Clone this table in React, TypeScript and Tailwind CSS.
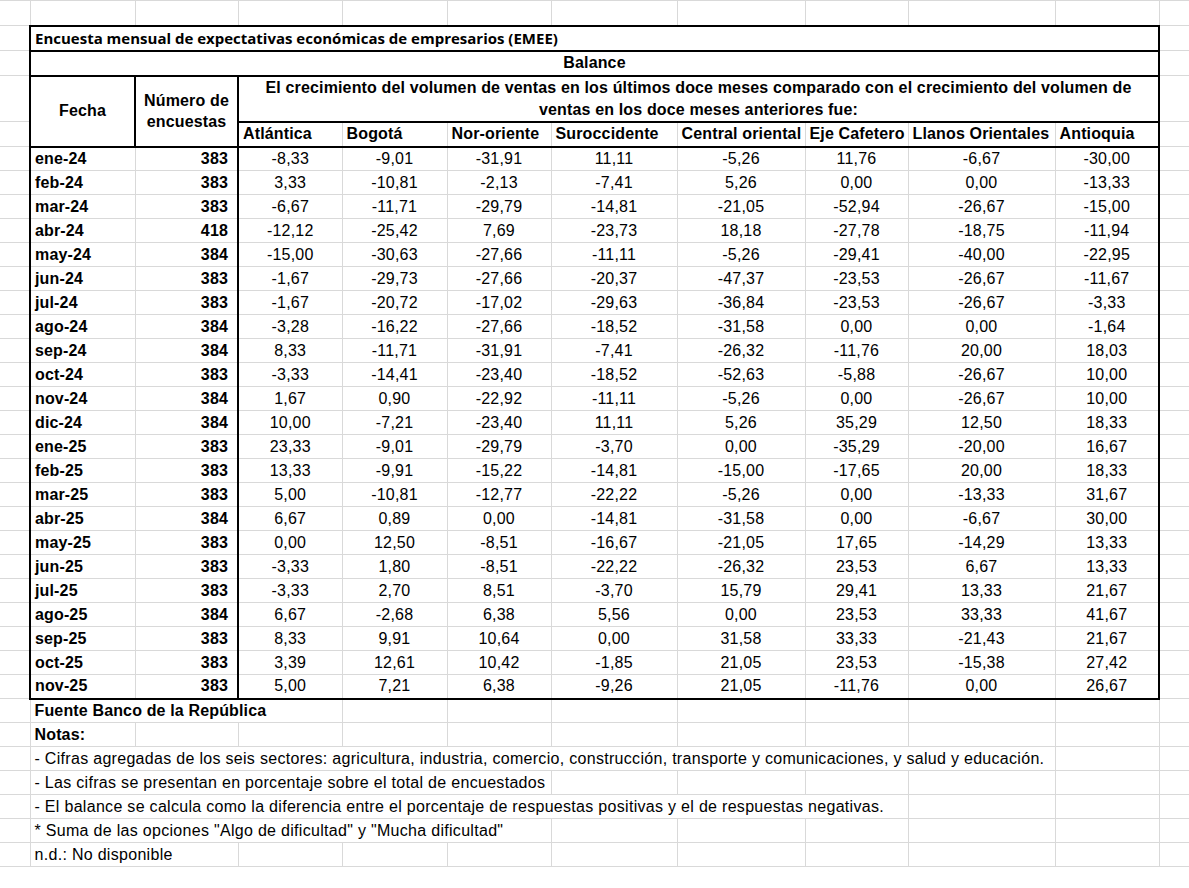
import React from "react";

const rows: [string, string, string[]][] = [
  ["ene-24", "383", ["-8,33", "-9,01", "-31,91", "11,11", "-5,26", "11,76", "-6,67", "-30,00"]],
  ["feb-24", "383", ["3,33", "-10,81", "-2,13", "-7,41", "5,26", "0,00", "0,00", "-13,33"]],
  ["mar-24", "383", ["-6,67", "-11,71", "-29,79", "-14,81", "-21,05", "-52,94", "-26,67", "-15,00"]],
  ["abr-24", "418", ["-12,12", "-25,42", "7,69", "-23,73", "18,18", "-27,78", "-18,75", "-11,94"]],
  ["may-24", "384", ["-15,00", "-30,63", "-27,66", "-11,11", "-5,26", "-29,41", "-40,00", "-22,95"]],
  ["jun-24", "383", ["-1,67", "-29,73", "-27,66", "-20,37", "-47,37", "-23,53", "-26,67", "-11,67"]],
  ["jul-24", "383", ["-1,67", "-20,72", "-17,02", "-29,63", "-36,84", "-23,53", "-26,67", "-3,33"]],
  ["ago-24", "384", ["-3,28", "-16,22", "-27,66", "-18,52", "-31,58", "0,00", "0,00", "-1,64"]],
  ["sep-24", "384", ["8,33", "-11,71", "-31,91", "-7,41", "-26,32", "-11,76", "20,00", "18,03"]],
  ["oct-24", "383", ["-3,33", "-14,41", "-23,40", "-18,52", "-52,63", "-5,88", "-26,67", "10,00"]],
  ["nov-24", "384", ["1,67", "0,90", "-22,92", "-11,11", "-5,26", "0,00", "-26,67", "10,00"]],
  ["dic-24", "384", ["10,00", "-7,21", "-23,40", "11,11", "5,26", "35,29", "12,50", "18,33"]],
  ["ene-25", "383", ["23,33", "-9,01", "-29,79", "-3,70", "0,00", "-35,29", "-20,00", "16,67"]],
  ["feb-25", "383", ["13,33", "-9,91", "-15,22", "-14,81", "-15,00", "-17,65", "20,00", "18,33"]],
  ["mar-25", "383", ["5,00", "-10,81", "-12,77", "-22,22", "-5,26", "0,00", "-13,33", "31,67"]],
  ["abr-25", "384", ["6,67", "0,89", "0,00", "-14,81", "-31,58", "0,00", "-6,67", "30,00"]],
  ["may-25", "383", ["0,00", "12,50", "-8,51", "-16,67", "-21,05", "17,65", "-14,29", "13,33"]],
  ["jun-25", "383", ["-3,33", "1,80", "-8,51", "-22,22", "-26,32", "23,53", "6,67", "13,33"]],
  ["jul-25", "383", ["-3,33", "2,70", "8,51", "-3,70", "15,79", "29,41", "13,33", "21,67"]],
  ["ago-25", "384", ["6,67", "-2,68", "6,38", "5,56", "0,00", "23,53", "33,33", "41,67"]],
  ["sep-25", "383", ["8,33", "9,91", "10,64", "0,00", "31,58", "33,33", "-21,43", "21,67"]],
  ["oct-25", "383", ["3,39", "12,61", "10,42", "-1,85", "21,05", "23,53", "-15,38", "27,42"]],
  ["nov-25", "383", ["5,00", "7,21", "6,38", "-9,26", "21,05", "-11,76", "0,00", "26,67"]],
];

const regions = [
  "Atlántica",
  "Bogotá",
  "Nor-oriente",
  "Suroccidente",
  "Central oriental",
  "Eje Cafetero",
  "Llanos Orientales",
  "Antioquia",
];

const widths = [30, 105, 103, 104, 105, 104, 126, 128, 103, 147, 104, 30];

const footer: [string, number, boolean][] = [
  ["Fuente Banco de la República", 3, true],
  ["Notas:", 1, true],
  [
    "- Cifras agregadas de los seis sectores: agricultura, industria, comercio, construcción, transporte y comunicaciones, y salud y educación.",
    9,
    false,
  ],
  ["- Las cifras se presentan en porcentaje sobre el total de encuestados", 5, false],
  [
    "- El balance se calcula como la diferencia entre el porcentaje de respuestas positivas y el de respuestas negativas.",
    8,
    false,
  ],
  ['* Suma de las opciones "Algo de dificultad" y "Mucha dificultad"', 5, false],
  ["n.d.: No disponible", 2, false],
];

const G = "border border-[#d9d9d9] p-0";

function Empty({ n, first }: { n: number; first?: boolean }) {
  return (
    <>
      {Array.from({ length: n }).map((_, i) => (
        <td key={i} className={first && i === 0 ? G + " border-l-0" : G} />
      ))}
    </>
  );
}

export default function App() {
  return (
    <div className="w-[1189px] h-[888px] bg-white overflow-hidden font-['Liberation_Sans',Arial,sans-serif] text-[16px] text-black">
      <table className="table-fixed border-collapse w-[1189px]">
        <colgroup>
          {widths.map((w, i) => (
            <col key={i} style={{ width: w }} />
          ))}
        </colgroup>
        <tbody>
          <tr className="h-[25px]">
            <Empty n={12} first />
          </tr>
          <tr className="h-[25px]">
            <td className={G + " border-l-0"} />
            <td
              colSpan={10}
              className={
                G +
                " border-2 border-black px-[4px] text-left align-middle font-['Open_Sans',sans-serif] font-bold text-[15px] leading-[18px] whitespace-nowrap"
              }
            >
              Encuesta mensual de expectativas económicas de empresarios (EMEE)
            </td>
            <td className={G} />
          </tr>
          <tr className="h-[25px]">
            <td className={G + " border-l-0"} />
            <td
              colSpan={10}
              className={G + " border-2 border-black text-center align-middle font-bold tracking-[0.15px] leading-[18px]"}
            >
              Balance
            </td>
            <td className={G} />
          </tr>
          <tr className="h-[45px]">
            <td className={G + " border-l-0"} />
            <td
              rowSpan={2}
              className={G + " border-2 border-black text-center align-middle font-bold tracking-[0.15px] leading-[22px]"}
            >
              Fecha
            </td>
            <td
              rowSpan={2}
              className={G + " border-2 border-black text-center align-middle font-bold tracking-[0.15px] leading-[21px]"}
            >
              Número de
              <br />
              encuestas
            </td>
            <td
              colSpan={8}
              className={G + " border-2 border-black text-center align-middle font-bold tracking-[0.15px] leading-[22px]"}
            >
              El crecimiento del volumen de ventas en los últimos doce meses comparado con el crecimiento del volumen de
              <br />
              ventas en los doce meses anteriores fue:
            </td>
            <td className={G} />
          </tr>
          <tr className="h-[25px]">
            <td className={G + " border-l-0"} />
            {regions.map((r, i) => (
              <td
                key={r}
                className={
                  G +
                  " border-b-2 border-b-black px-[4px] text-left align-middle font-bold tracking-[0.15px] leading-[18px] whitespace-nowrap overflow-hidden" +
                  (i === 7 ? " border-r-2 border-r-black" : "")
                }
              >
                {r}
              </td>
            ))}
            <td className={G} />
          </tr>
          {rows.map(([d, n, vals], ri) => {
            const last = ri === rows.length - 1;
            const b = last ? " border-b-2 border-b-black" : "";
            return (
              <tr key={d} className="h-[24px]">
                <td className={G + " border-l-0"} />
                <td
                  className={
                    G +
                    " border-l-2 border-l-black px-[4px] text-left align-middle font-bold tracking-[0.15px] leading-[18px]" +
                    b
                  }
                >
                  {d}
                </td>
                <td
                  className={
                    G +
                    " border-r-2 border-r-black pr-[9px] text-right align-middle font-bold tracking-[0.15px] leading-[18px]" +
                    b
                  }
                >
                  {n}
                </td>
                {vals.map((v, i) => (
                  <td
                    key={i}
                    className={
                      G +
                      " text-center align-middle tracking-[0.2px] leading-[18px]" +
                      b +
                      (i === 7 ? " border-r-2 border-r-black" : "")
                    }
                  >
                    {v}
                  </td>
                ))}
                <td className={G} />
              </tr>
            );
          })}
          {footer.map(([t, span, bold], fi) => (
            <tr key={fi} className="h-[24px]">
              <td className={G + " border-l-0"} />
              <td
                colSpan={span}
                className={
                  G +
                  " px-[4px] text-left align-middle leading-[18px] whitespace-nowrap" +
                  (bold ? " font-bold tracking-[0.15px]" : " tracking-[0.3px]")
                }
              >
                {t}
              </td>
              <Empty n={11 - span} />
            </tr>
          ))}
        </tbody>
      </table>
    </div>
  );
}
